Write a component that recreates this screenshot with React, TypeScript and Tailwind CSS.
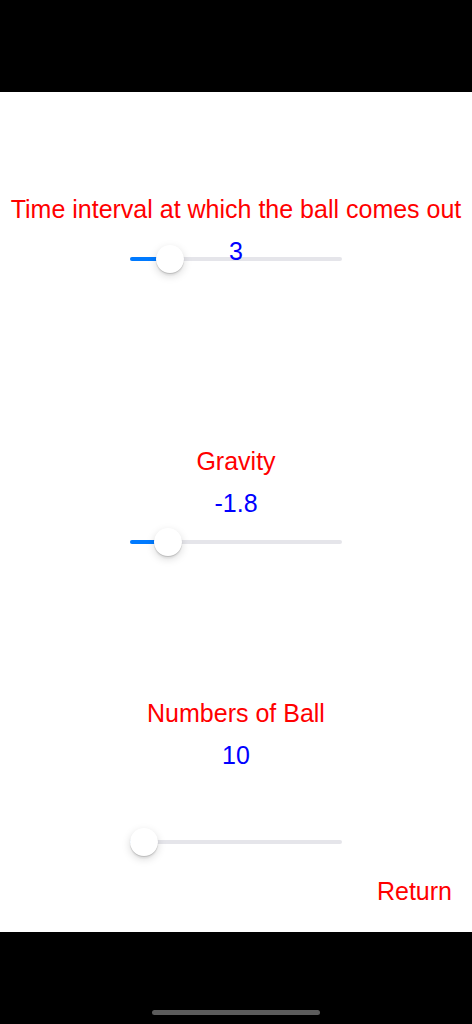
import React from "react";

function Slider({ left }: { left: number }) {
  return (
    <div className="relative w-[212px] h-[28px]">
      <div className="absolute left-0 right-0 top-[12px] h-[4px] rounded-full bg-[#e5e5ea]" />
      <div
        className="absolute left-0 top-[12px] h-[4px] rounded-full bg-[#007aff]"
        style={{ width: left + 14 }}
      />
      <div
        className="absolute top-0 w-[28px] h-[28px] rounded-full bg-white shadow-[0_3px_8px_rgba(0,0,0,0.15),0_1px_1px_rgba(0,0,0,0.16),0_3px_1px_rgba(0,0,0,0.03)]"
        style={{ left }}
      />
    </div>
  );
}

export default function App() {
  return (
    <div className="w-[472px] h-[1024px] bg-black flex flex-col" style={{ fontFamily: '"Liberation Sans", Arial, sans-serif' }}>
      <div className="h-[92px] shrink-0" />
      <div className="h-[840px] bg-white flex flex-col items-center shrink-0">
        <div className="mt-[104px] h-[26px] leading-[26px] text-[25px] text-[#ff0000] whitespace-nowrap">
          Time interval at which the ball comes out
        </div>
        <div className="relative mt-[23px]">
          <Slider left={26} />
          <div className="absolute left-0 right-0 top-[-7px] h-[26px] leading-[26px] text-center text-[25px] text-[#0000ff]">
            3
          </div>
        </div>
        <div className="mt-[175px] h-[26px] leading-[26px] text-[25px] text-[#ff0000]">Gravity</div>
        <div className="mt-[16px] h-[26px] leading-[26px] text-[25px] text-[#0000ff]">-1.8</div>
        <div className="mt-[12px]">
          <Slider left={24} />
        </div>
        <div className="mt-[144px] h-[26px] leading-[26px] text-[25px] text-[#ff0000]">Numbers of Ball</div>
        <div className="mt-[16px] h-[26px] leading-[26px] text-[25px] text-[#0000ff]">10</div>
        <div className="mt-[60px]">
          <Slider left={0} />
        </div>
        <div className="mt-[22px] self-end mr-[20px] h-[26px] leading-[26px] text-[25px] text-[#ff0000]">Return</div>
      </div>
      <div className="flex-1 flex items-end justify-center pb-[9px]">
        <div className="w-[168px] h-[5px] rounded-full bg-[#5c5c5c]" />
      </div>
    </div>
  );
}
